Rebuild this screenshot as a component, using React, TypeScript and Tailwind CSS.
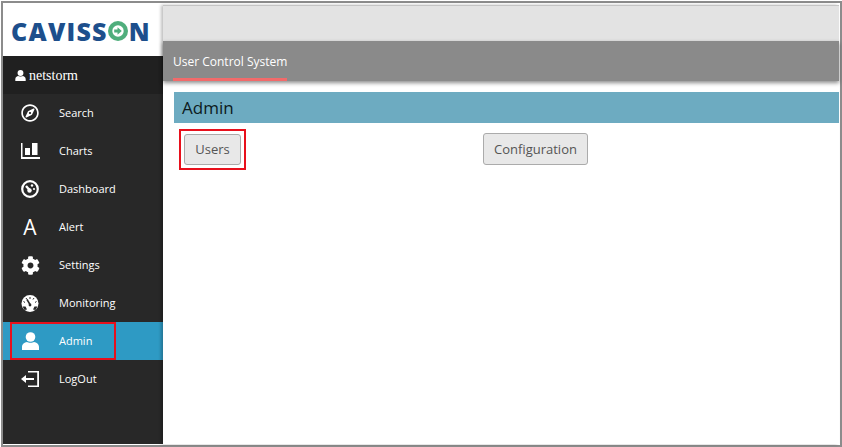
import { FaCog, FaRegCompass } from 'react-icons/fa';
import { ReactNode } from 'react';

const ChartIcon = () => (
  <svg width="19" height="16" viewBox="0 0 19 16" fill="white">
    <rect x="0" y="0" width="1.5" height="16" />
    <rect x="0" y="14" width="19" height="2" />
    <rect x="4" y="5" width="5" height="7" />
    <rect x="11" y="0" width="5.5" height="12" />
  </svg>
);

const DashIcon = () => (
  <svg width="18" height="18" viewBox="0 0 18 18" fill="none">
    <circle cx="9" cy="9" r="7.8" stroke="white" strokeWidth="2.2" />
    <path d="M5 6 L9.5 11" stroke="white" strokeWidth="2.4" />
    <circle cx="8.5" cy="10.5" r="2.2" fill="white" />
    <circle cx="11" cy="5.5" r="1.2" fill="white" />
    <circle cx="13" cy="9" r="1.1" fill="white" />
  </svg>
);

const GaugeIcon = () => (
  <svg width="18" height="17" viewBox="0 0 18 17">
    <circle cx="9" cy="8.5" r="8.5" fill="white" />
    <path d="M9 2V4M5 3L6 4.5M13 3L12 4.5M2.5 6.5L4 7.5M15.5 6.5L14 7.5" stroke="#282828" strokeWidth="1" />
    <path d="M6 4.5L9 9.5" stroke="#282828" strokeWidth="1.5" />
    <circle cx="9" cy="10" r="1.4" fill="#282828" />
    <path d="M1.5 11.5H4.5L6 14.5L3.5 15Z" fill="#282828" />
    <path d="M16.5 11.5H13.5L12 14.5L14.5 15Z" fill="#282828" />
  </svg>
);

const UserIcon = ({ width, height }: { width: number; height: number }) => (
  <svg width={width} height={height} viewBox="0 0 17 18" fill="white">
    <circle cx="8.5" cy="5" r="4.8" />
    <path d="M0 18V15C0 12 2.5 10.5 5 10C6 11 11 11 12 10C14.5 10.5 17 12 17 15V18Z" />
  </svg>
);

const LogoutIcon = () => (
  <svg width="18" height="16" viewBox="0 0 18 16" fill="white">
    <path d="M7 0H18V16H7V14.4H16.2V1.6H7Z" />
    <path d="M0 8L5 4V7H13V9H5V12Z" />
  </svg>
);

const menu: { label: string; icon: ReactNode }[] = [
  { label: 'Search', icon: <FaRegCompass size={18} /> },
  { label: 'Charts', icon: <ChartIcon /> },
  { label: 'Dashboard', icon: <DashIcon /> },
  { label: 'Alert', icon: <span className="text-[21px] leading-none">A</span> },
  { label: 'Settings', icon: <FaCog size={19} /> },
  { label: 'Monitoring', icon: <GaugeIcon /> },
  { label: 'Admin', icon: <UserIcon width={17} height={18} /> },
  { label: 'LogOut', icon: <LogoutIcon /> },
];

const App = () => {
  return (
    <div className="w-[842px] h-[447px] bg-white pt-[1px] pl-[1px] overflow-hidden font-['Open_Sans',sans-serif]">
      <div className="w-full h-full border-2 border-[#8c8c8c] flex flex-col">
        <div className="flex flex-1 min-h-0 pt-[2px] pr-[1px] pb-[1px]">
          {/* left nav */}
          <div className="w-[160px] shrink-0 bg-[#282828] flex flex-col">
            <div className="h-[51px] bg-white flex items-center pl-[8px] pt-[1px] text-[#1d4f8c]">
              <span className="text-[25px] leading-none font-extrabold tracking-[1.25px]">CAVISS</span>
              <svg width="20" height="20" viewBox="0 0 21 21" className="shrink-0">
                <circle cx="10.5" cy="10.5" r="10.5" fill="#4fae7c" />
                <circle cx="10.5" cy="10.5" r="6" fill="white" />
                <path d="M6.5 9H10V6.5L14.5 10.5L10 14.5V12H6.5Z" fill="#4fae7c" />
              </svg>
              <span className="ml-[1px] text-[25px] leading-none font-extrabold">N</span>
            </div>
            <div className="h-[38px] bg-[#202020] flex items-center pl-[12px] text-white">
              <UserIcon width={11} height={11} />
              <span className="ml-[3px] text-[14px] font-['Liberation_Serif',serif]">netstorm</span>
            </div>
            {menu.map((item) => (
              <div
                key={item.label}
                className={`relative h-[38px] flex items-center text-white ${item.label === 'Admin' ? 'bg-[#2e9ac4]' : ''}`}
              >
                <div className="w-[56px] pr-[2px] flex items-center justify-center shrink-0">{item.icon}</div>
                <span className="text-[11px]">{item.label}</span>
                {item.label === 'Admin' && (
                  <div className="absolute left-[7px] top-0 w-[106px] h-[38px] border-2 border-[#e8101c]" />
                )}
              </div>
            ))}
          </div>

          {/* main */}
          <div className="relative flex-1 min-w-0 flex flex-col bg-white shadow-[-2px_0_3px_rgba(0,0,0,0.25)]">
            <div className="h-[36px] bg-[#e3e3e3] border-t border-[#c4c4c4] shrink-0" />
            <div className="h-[40px] bg-[#8a8a8a] shadow-[0_2px_4px_rgba(0,0,0,0.45)] shrink-0 pl-[10px] flex">
              <div className="h-[40px] pt-[12px] border-b-[3px] border-[#f26a6a] text-[12px] leading-[18px] text-white">
                User Control System
              </div>
            </div>
            <div className="pl-[11px] pt-[11px]">
              <div className="h-[31px] bg-[#6dabc1] pl-[8px] flex items-center text-[17px] text-[#0c1a20]">Admin</div>
              <div className="flex pt-[6px] pl-[5px]">
                <div className="border-2 border-[#e8101c] p-[3px] w-[67px] h-[41px] shrink-0">
                  <button className="w-full h-full bg-[#e8e8e8] border border-[#ababab] rounded-[3px] text-[13px] text-[#555]">
                    Users
                  </button>
                </div>
                <button className="ml-[237px] mt-[4px] w-[105px] h-[32px] pt-[1px] bg-[#e8e8e8] border border-[#ababab] rounded-[3px] text-[13px] text-[#555]">
                  Configuration
                </button>
              </div>
            </div>
          </div>
        </div>
      </div>
    </div>
  );
};

export default App;
